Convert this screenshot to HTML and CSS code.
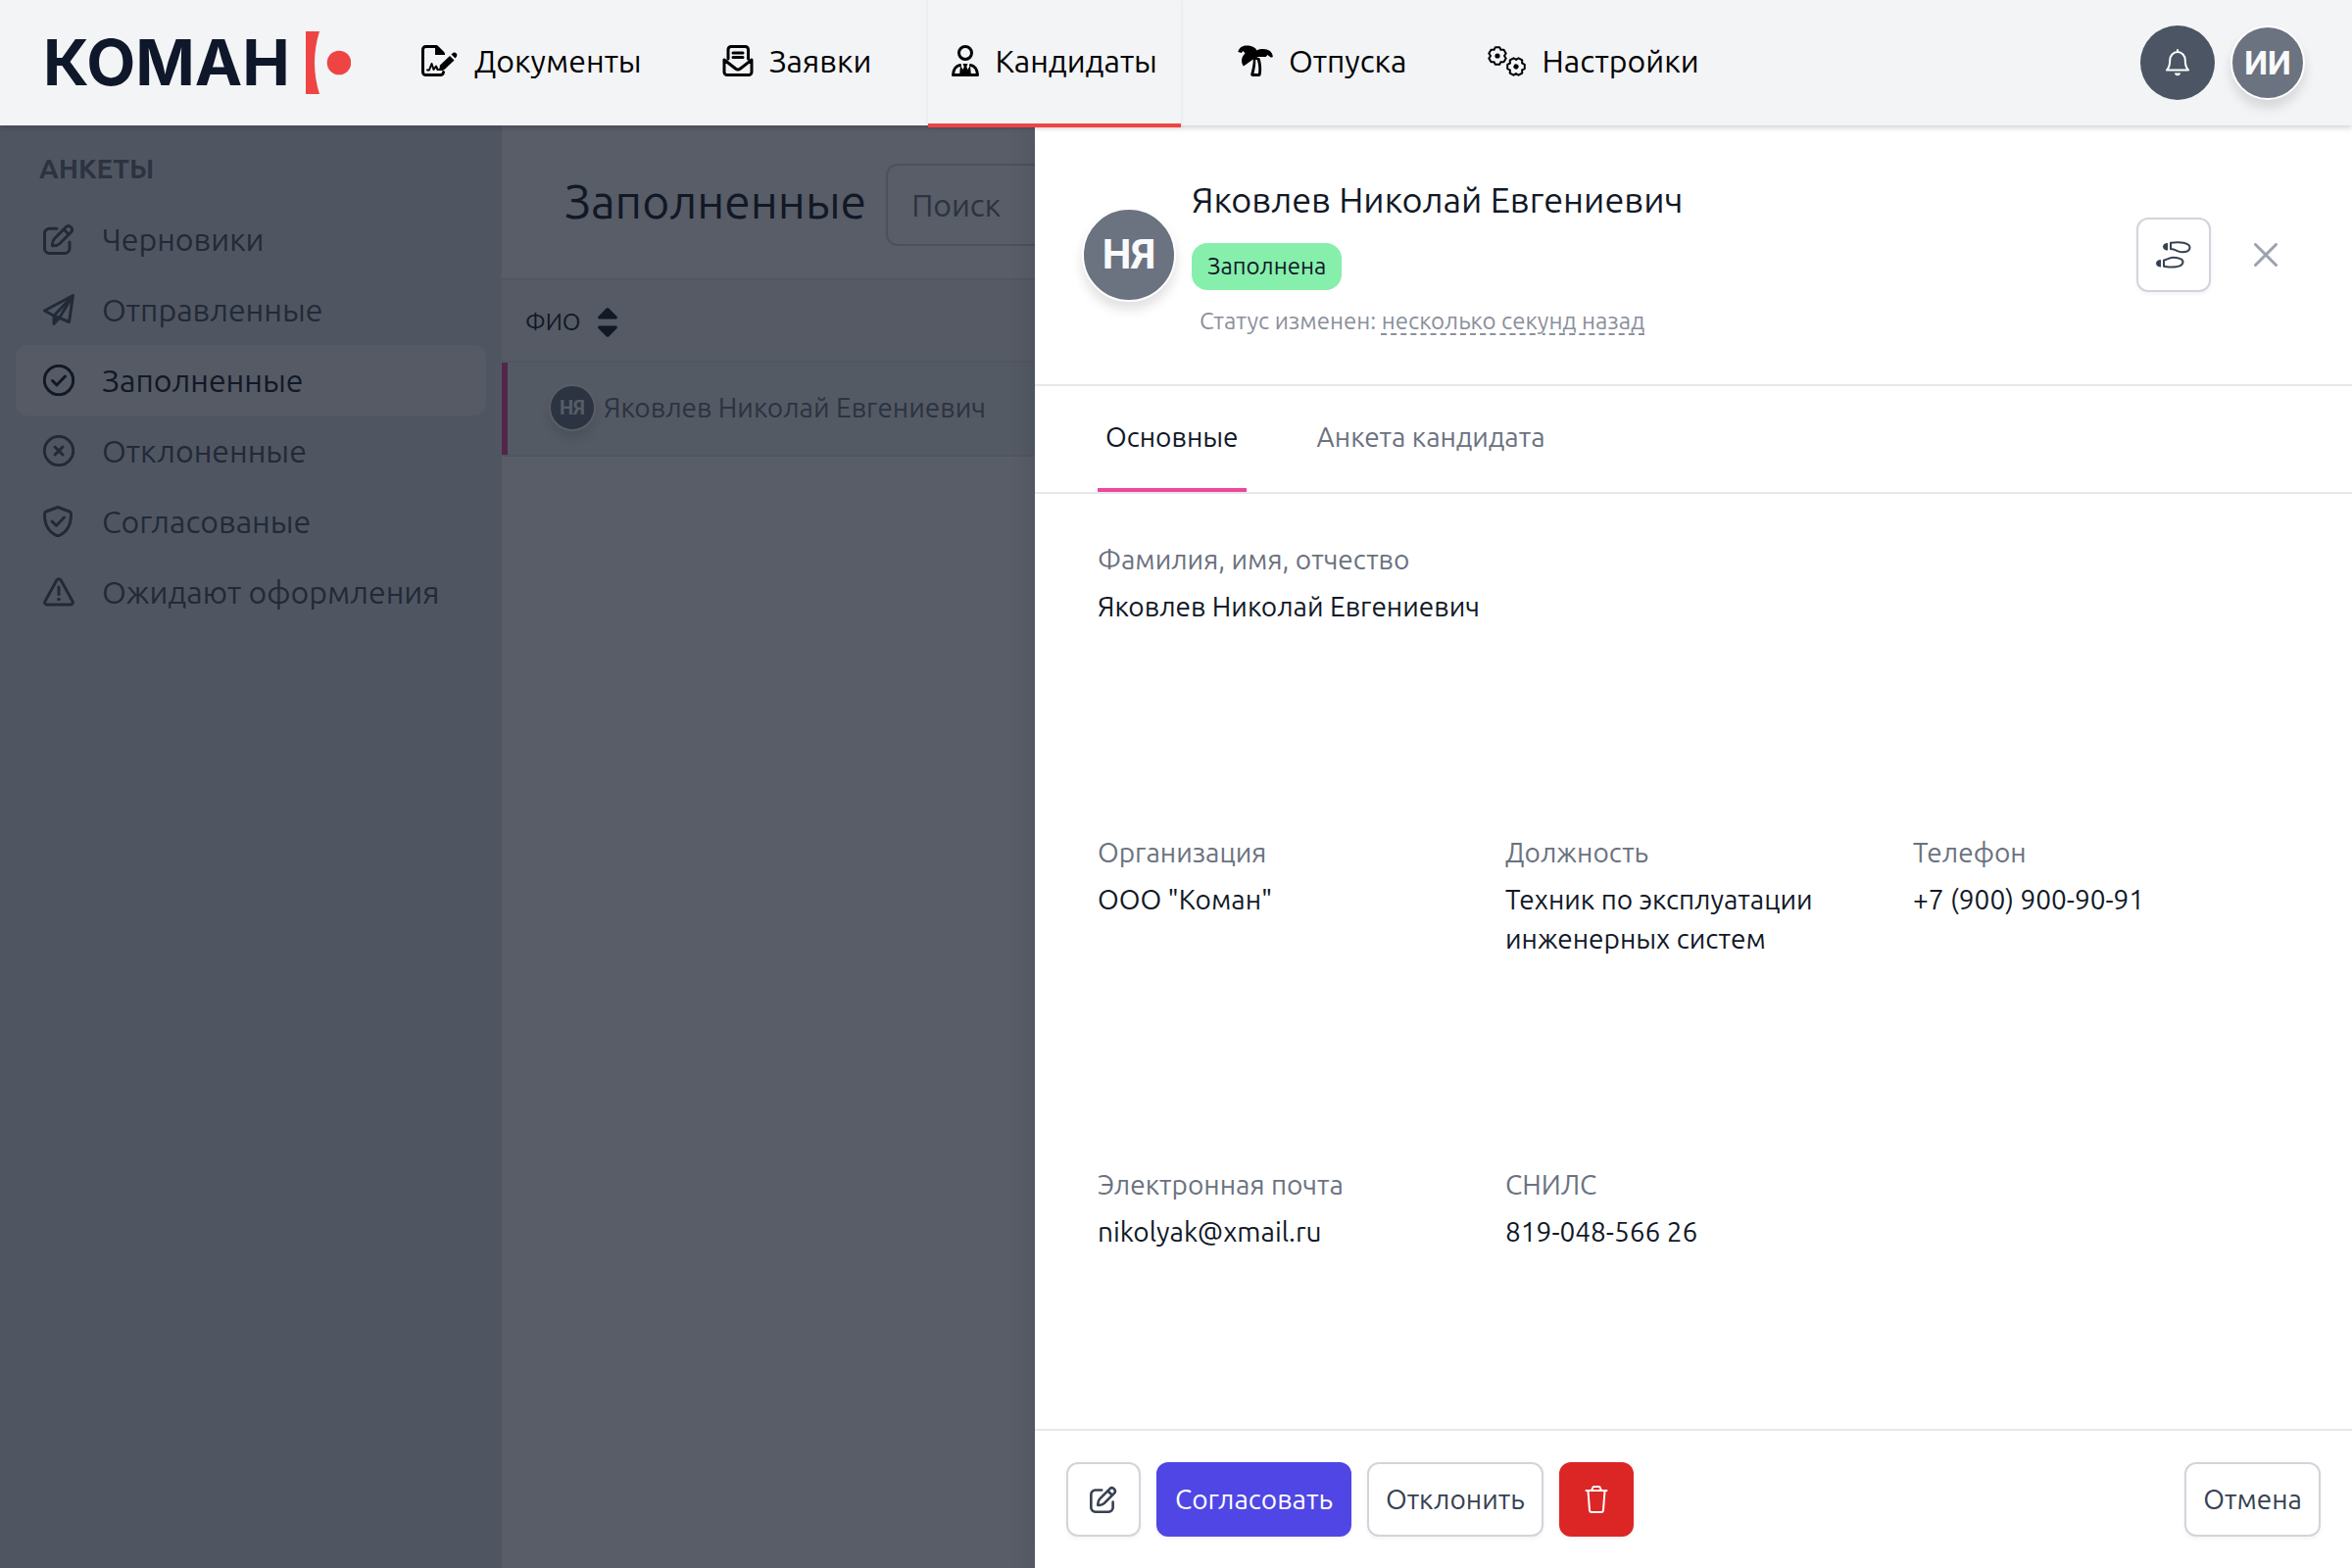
FILE: index.html
```html
<!DOCTYPE html>
<html lang="ru">
<head>
<meta charset="utf-8">
<title>Коман — Кандидаты</title>
<link rel="stylesheet" href="styles.css">
</head>
<body>
<svg class="sprite" aria-hidden="true">
  <symbol id="edit" viewBox="0 0 32 32"><path d="M14 5.200H6.500A5 5 0 0 0 1.500 10.200V25.500A5 5 0 0 0 6.500 30.500H22A5 5 0 0 0 27 25.500V19"/><path d="M23.500 3.500a3.700 3.700 0 0 1 5.200 5.200L17 20.500c-2 2-5 2.500-7.500 2.300-.2-2.500.3-5.500 2.300-7.500zM21 6l5.200 5.200"/></symbol>
  <symbol id="plane" viewBox="0 0 32 32"><path d="M30.500 1.500 1.500 17l9.500 5.200L26.500 28.500zM30.500 1.500 11 22.200v8.300l5.500-6z"/><path class="solid" d="M11 22.500v8l6-5.500z"/></symbol>
  <symbol id="check" viewBox="0 0 32 32"><circle cx="16" cy="16" r="14.700"/><path d="M9.500 16.500l4.500 4.300 8.500-8.800"/></symbol>
  <symbol id="cross" viewBox="0 0 32 32"><circle cx="16" cy="16" r="14.700"/><path d="M12 12l8 8M20 12l-8 8"/></symbol>
  <symbol id="shield" viewBox="0 0 32 32"><path d="M15 1.500 27 6q1.500.6 1.500 2.500C28.500 20 24 27 16.500 30.300a4 4 0 0 1-3 0C6 27 1.500 20 1.500 8.500 1.500 6.600 3 6 3 6z"/><path d="M9 16l4.500 4.300L21.500 12"/></symbol>
  <symbol id="warn" viewBox="0 0 32 32"><path d="M14 3.800a2.300 2.300 0 0 1 4 0L30 25.500a2.300 2.300 0 0 1-2 3.500H4a2.300 2.300 0 0 1-2-3.500z"/><path d="M16 11v7.500M15.500 23.500h1"/></symbol>
  <symbol id="sign" viewBox="0 0 38 32"><path d="M22 8 15.500 1.500H4.500a3 3 0 0 0-3 3v23a3 3 0 0 0 3 3h15a3 3 0 0 0 3-3"/><path class="solid" d="M14 1v9H24V8.500L16.500 1z"/><path class="thin" d="M6 25.500h2l2.500-6.500 2 6 2.500-3.500 1.500 3.500h5"/><path class="solid" d="M19 20.500 29 11l4.500 4.500L23.500 25 18 26z"/><path class="solid" d="m30.500 9.500 2-1.700q1.500-1 3 .4 1.600 1.600.5 3.300l-1.500 2z"/></symbol>
  <symbol id="mail" viewBox="0 0 32 32"><path d="M6 14V4.500a3 3 0 0 1 3-3h14.500a3 3 0 0 1 3 3V14M2 15v12.500a3 3 0 0 0 3 3h22a3 3 0 0 0 3-3V15L18.500 24a4 4 0 0 1-5 0zM11 8h10M11 12.500h10"/></symbol>
  <symbol id="person" viewBox="0 0 28 32"><circle cx="14" cy="8" r="6.500"/><path d="M8.500 20.500C4.500 21 1.800 25 1.500 30.500h25c-.3-5.500-3-9.500-7-10"/><path class="solid" d="M11.500 19h5l-1.200 3 1 3 2.700-4 1 10.500H8L9 21l2.700 4 1-3z"/></symbol>
  <symbol id="palm" viewBox="0 0 36 32"><path class="solid" d="M.3 7C1 3 4.500.4 9 .4c5 0 9 1.800 10.500 5C21 4.500 23.500 4 26 4c5.500 0 9.500 3 9.800 7.700 0 .8-1 .8-2.300.7L30.500 10l-1.800 2H19l3.500 1.500c1.500 5 2.200 11 1.200 16.500-.2 1.200-1 2-2.200 2h-6c-1.500 0-2.500-1-2.200-2.500 1.500-5.500 2.500-10 2.500-15L6 21.500C2.500 17 4 11.500 7.500 8.500L5.500 6 3.800 8z"/><path class="hole" d="M18.200 15h1.600c1.500 4.500 2 9.500 1.200 14h-4.500c1.200-5 2-9.500 1.700-14z"/></symbol>
  <symbol id="cogs" viewBox="0 0 40 32">
    <g transform="translate(10 11)"><path d="M-2.200-8.800H2.200L3.400-6.200 6.500-6.300 8.700-2.500 7 0 8.700 2.500 6.500 6.300 3.400 6.200 2.200 8.800H-2.200L-3.400 6.200-6.500 6.300-8.700 2.500-7 0-8.700-2.500-6.500-6.300-3.400-6.200Z"/><circle class="solid" r="2.600"/></g>
    <g transform="translate(29 22) rotate(30)"><path d="M-2.200-8.800H2.200L3.400-6.200 6.500-6.300 8.700-2.500 7 0 8.700 2.500 6.500 6.300 3.400 6.200 2.200 8.800H-2.200L-3.400 6.200-6.500 6.300-8.700 2.500-7 0-8.700-2.500-6.500-6.300-3.400-6.200Z"/><circle class="solid" r="2.600"/></g>
  </symbol>
  <symbol id="bell" viewBox="0 0 24 28"><path d="M1 21.500h22c-2.500-2.500-3.200-5-3.200-10a7.800 8.500 0 0 0-15.600 0c0 5-.7 7.500-3.200 10zM12 1v2"/><path class="solid" d="M8.800 24.500h6.400c-.5 1.700-1.600 2.800-3.200 2.800s-2.700-1.100-3.200-2.800z"/></symbol>
  <symbol id="steps" viewBox="0 0 36 28"><path d="M15 1.800c4-.5 9-.8 13 0 4.500 1 6.500 2.800 6.500 4.700 0 3-3.500 4.700-8 4.700-3.500 0-6-2-8.500-2.700L15 8z"/><path class="solid" d="M12 2v7.500C9 9.500 7 8 7 5.700S9 2 12 2z"/><path d="M8 19.500c2.500-.3 5.500-2.800 9-2.800 5.500 0 10.500 1.600 10.500 4.300 0 3.700-5 5.500-11.500 5.500-3 0-5.500-.4-8-.7z"/><path class="solid" d="M5 19v7.500C2 26.500 0 25 0 22.700S2 19 5 19z"/></symbol>
  <symbol id="close" viewBox="0 0 24 24"><path d="M1.500 1.500l21 21M22.500 1.500l-21 21"/></symbol>
  <symbol id="trash" viewBox="0 0 28 28"><path d="M5.500 5.500 7 25q.2 2 2 2h10q1.800 0 2-2L22.500 5.500M3.500 5h21M9 5l1-2.500q.4-1.500 1.500-1.500h5q1.100 0 1.500 1.500l1 2.500"/></symbol>
  <symbol id="sort" viewBox="0 0 20 30"><path class="solid" d="M8.800.6q1.200-.9 2.400 0L19.500 9c.8 1 .3 2.500-1 2.500h-17C.2 11.500-.3 10 .5 9zM8.800 29.400q1.200.9 2.400 0L19.500 21c.8-1 .3-2.500-1-2.500h-17c-1.300 0-1.800 1.500-1 2.500z"/></symbol>
</svg>

<header class="topbar">
  <a class="logo" href="#" aria-label="Коман">
    <span class="logo-text">КОМАН</span>
    <svg class="logo-mark" viewBox="0 0 46 64"><path fill="#ef4444" d="M0 0h14Q4 32 14 64H0z"/><circle cx="34" cy="32" r="12.300" fill="#ef4444"/></svg>
  </a>
  <nav class="menu">
    <a href="#"><svg class="icon i38"><use href="#sign"/></svg>Документы</a>
    <a href="#"><svg class="icon i32"><use href="#mail"/></svg>Заявки</a>
    <a href="#" class="active"><svg class="icon i28"><use href="#person"/></svg>Кандидаты</a>
    <a href="#"><svg class="icon i36"><use href="#palm"/></svg>Отпуска</a>
    <a href="#"><svg class="icon i40"><use href="#cogs"/></svg>Настройки</a>
  </nav>
  <div class="user">
    <button class="bell" aria-label="Уведомления"><svg class="icon"><use href="#bell"/></svg></button>
    <button class="avatar medium">ИИ</button>
  </div>
</header>

<div class="page">
  <aside class="sidebar">
    <h2>Анкеты</h2>
    <nav>
      <a href="#"><svg class="icon"><use href="#edit"/></svg>Черновики</a>
      <a href="#"><svg class="icon"><use href="#plane"/></svg>Отправленные</a>
      <a href="#" class="active"><svg class="icon"><use href="#check"/></svg>Заполненные</a>
      <a href="#"><svg class="icon"><use href="#cross"/></svg>Отклоненные</a>
      <a href="#"><svg class="icon"><use href="#shield"/></svg>Согласованые</a>
      <a href="#"><svg class="icon"><use href="#warn"/></svg>Ожидают оформления</a>
    </nav>
  </aside>
  <main class="main">
    <div class="toolbar">
      <h1>Заполненные</h1>
      <input type="search" placeholder="Поиск" aria-label="Поиск">
    </div>
    <table>
      <thead><tr><th><span class="cell">ФИО <svg class="sort"><use href="#sort"/></svg></span></th></tr></thead>
      <tbody><tr><td><span class="cell"><span class="avatar small">НЯ</span>Яковлев Николай Евгениевич</span></td></tr></tbody>
    </table>
  </main>

  <div class="overlay"></div>
  <section class="drawer" role="dialog" aria-label="Яковлев Николай Евгениевич">
    <div class="drawer-head">
      <span class="avatar large">НЯ</span>
      <div class="who">
        <h2>Яковлев Николай Евгениевич</h2>
        <span class="badge">Заполнена</span>
        <p>Статус изменен: <span class="ago">несколько секунд назад</span></p>
      </div>
      <button class="btn square" aria-label="История"><svg class="icon steps"><use href="#steps"/></svg></button>
      <button class="close" aria-label="Закрыть"><svg class="icon"><use href="#close"/></svg></button>
    </div>
    <div class="tabs">
      <button class="active">Основные</button>
      <button>Анкета кандидата</button>
    </div>
    <dl class="fields">
      <div class="wide"><dt>Фамилия, имя, отчество</dt><dd>Яковлев Николай Евгениевич</dd></div>
      <div><dt>Организация</dt><dd>ООО "Коман"</dd></div>
      <div><dt>Должность</dt><dd>Техник по эксплуатации инженерных систем</dd></div>
      <div><dt>Телефон</dt><dd>+7 (900) 900-90-91</dd></div>
      <div><dt>Электронная почта</dt><dd>nikolyak@xmail.ru</dd></div>
      <div><dt>СНИЛС</dt><dd>819-048-566 26</dd></div>
    </dl>
    <div class="drawer-foot">
      <button class="btn square" aria-label="Редактировать"><svg class="icon"><use href="#edit"/></svg></button>
      <button class="btn primary">Согласовать</button>
      <button class="btn">Отклонить</button>
      <button class="btn square danger" aria-label="Удалить"><svg class="icon"><use href="#trash"/></svg></button>
      <button class="btn cancel">Отмена</button>
    </div>
  </section>
</div>
</body>
</html>
```
FILE: styles.css
```css
* { box-sizing: border-box; }

body {
  margin: 0;
  height: 100vh;
  display: flex;
  flex-direction: column;
  font-family: Ubuntu, "Noto Sans", sans-serif;
  font-size: 28px;
  line-height: 40px;
  color: #111827;
  background: #fff;
}

h1, h2, p, dl, dd { margin: 0; font-weight: 400; }
a { color: inherit; text-decoration: none; }
button, input { font: inherit; color: inherit; }
button { border: 0; padding: 0; background: none; }

.sprite { position: absolute; width: 0; height: 0; }
.icon {
  flex: none;
  fill: none;
  stroke: currentColor;
  stroke-width: 3px;
  stroke-linecap: round;
  stroke-linejoin: round;
  width: 32px;
  height: 32px;
}
.solid { fill: currentColor; stroke: none; }
.hole { fill: #f3f4f6; stroke: none; }
.thin { stroke-width: 2px; }

/* top bar */
.topbar {
  position: relative;
  z-index: 2;
  flex: none;
  display: flex;
  align-items: center;
  height: 128px;
  padding: 0 48px 0 44px;
  background: #f3f4f6;
  box-shadow: 0 2px 6px rgba(0, 0, 0, .2);
}
.logo { display: flex; align-items: center; gap: 8px; width: 314px; color: #0f172a; }
.logo-text { font: 700 65px/64px Inter, sans-serif; width: 260px; }
.logo-mark { width: 46px; height: 64px; }
.menu { display: flex; align-self: stretch; gap: 34px; margin-left: 48px; font-size: 32px; color: #000; }
.menu a { display: flex; align-items: center; gap: 16px; height: 130px; padding: 0 24px 2px; border-bottom: 4px solid transparent; }
.menu .active { border-bottom-color: #ef4444; box-shadow: 0 0 4px rgba(0, 0, 0, .08); }
.i28 { width: 28px; }
.i36 { width: 36px; }
.i38 { width: 38px; }
.i40 { width: 40px; }
.menu .i40 { stroke-width: 2px; }
.user { display: flex; gap: 16px; margin-left: auto; }
.bell {
  display: grid;
  place-items: center;
  width: 76px;
  height: 76px;
  border-radius: 50%;
  background: #4b5563;
  color: #fff;
}
.bell .icon { width: 24px; height: 28px; stroke-width: 2px; }

.avatar {
  flex: none;
  display: grid;
  place-items: center;
  border: 2px solid #fff;
  border-radius: 50%;
  background: #6b7280;
  color: #f9fafb;
  font-family: Roboto, sans-serif;
  font-weight: 700;
  box-shadow: 0 8px 12px rgba(0, 0, 0, .12);
}
.small { width: 48px; height: 48px; font-size: 20px; }
.medium { width: 76px; height: 76px; font-size: 34px; }
.large { width: 96px; height: 96px; font-size: 42px; }

/* page */
.page { position: relative; flex: 1; display: flex; min-height: 0; }
.overlay { position: absolute; inset: 0; background: rgba(17, 24, 39, .7); }

.sidebar { flex: none; width: 512px; padding: 24px 16px; background: #e5e7eb; color: #4b5563; }
.sidebar h2 { padding: 0 24px; margin-bottom: 16px; font-size: 28px; font-weight: 600; text-transform: uppercase; color: #6b7280; }
.sidebar a { display: flex; align-items: center; gap: 28px; height: 72px; padding: 0 28px; border-radius: 12px; font-size: 32px; }
.sidebar .active { background: #f3f4f6; color: #111827; }

.main { flex: 1; min-width: 0; }
.toolbar { display: flex; align-items: center; gap: 20px; height: 158px; padding: 6px 64px 0; border-bottom: 2px solid #e5e7eb; }
.toolbar h1 { padding-bottom: 8px; font-size: 48px; line-height: 64px; }
.toolbar input { width: 480px; height: 84px; padding: 0 24px; border: 2px solid #d1d5db; border-radius: 12px; background: #fff; font-size: 32px; }
.toolbar input::placeholder { color: #6b7280; opacity: 1; }
table { width: 100%; border-collapse: separate; border-spacing: 0; }
th { height: 84px; padding: 4px 24px 0; background: #f3f4f6; border-bottom: 2px solid #e5e7eb; font-size: 24px; font-weight: 400; text-align: left; }
td { height: 96px; padding: 0 48px 2px; background: #f1f3f5; border-bottom: 2px solid #e5e7eb; box-shadow: inset 6px 0 #ec4899; color: #6b7280; }
.cell { display: flex; align-items: center; gap: 8px; }
th .cell { gap: 18px; }
.sort { width: 20px; height: 30px; fill: #000; }

/* drawer */
.drawer {
  position: absolute;
  inset: 0 0 0 44%;
  display: flex;
  flex-direction: column;
  background: #fff;
  box-shadow: 0 0 24px rgba(0, 0, 0, .15);
}
.drawer-head { display: flex; align-items: center; height: 266px; padding: 0 68px 0 48px; border-bottom: 2px solid #e5e7eb; }
.who { display: flex; flex-direction: column; align-items: flex-start; margin: 0 auto 0 16px; padding-top: 8px; }
.who h2 { font-size: 36px; line-height: 56px; }
.badge { margin: 16px 0 8px; padding: 0 16px; border-radius: 16px; background: #86efac; font-size: 24px; line-height: 48px; }
.who p { padding: 4px 8px; font-size: 24px; color: #8b909c; }
.ago { text-decoration: underline dashed 2px; text-underline-offset: 4px; }
.icon.steps { width: 36px; height: 28px; stroke-width: 2px; }
.close { width: 40px; height: 40px; display: grid; place-items: center; margin-left: 36px; color: #9ca3af; }
.close .icon { width: 24px; height: 24px; }

.tabs { display: flex; gap: 64px; height: 110px; padding: 0 64px; border-bottom: 2px solid #e5e7eb; }
.tabs button { padding: 0 8px; border-bottom: 4px solid transparent; color: #6b7280; }
.tabs .active { border-color: #ec4899; color: #111827; }

.fields {
  flex: 1;
  display: grid;
  grid-template-columns: repeat(3, 1fr);
  align-content: start;
  gap: 211px 32px;
  padding: 47px 64px;
}
.wide { grid-column: 1 / -1; }
dt { margin-bottom: 8px; color: #6b7280; }

.drawer-foot { display: flex; gap: 16px; padding: 32px; border-top: 2px solid #e5e7eb; }
.btn {
  display: grid;
  place-items: center;
  height: 76px;
  padding: 0 17px;
  border: 2px solid #d1d5db;
  border-radius: 12px;
  background: #fff;
  color: #374151;
  box-shadow: 0 2px 4px rgba(0, 0, 0, .05);
}
.square { width: 76px; padding: 0; }
.square .icon { height: 28px; }
.primary { border-color: #4f46e5; background: #4f46e5; color: #fff; }
.danger { border-color: #dc2626; background: #dc2626; color: #fff; }
.danger .icon { stroke-width: 2px; }
.cancel { margin-left: auto; }
```
